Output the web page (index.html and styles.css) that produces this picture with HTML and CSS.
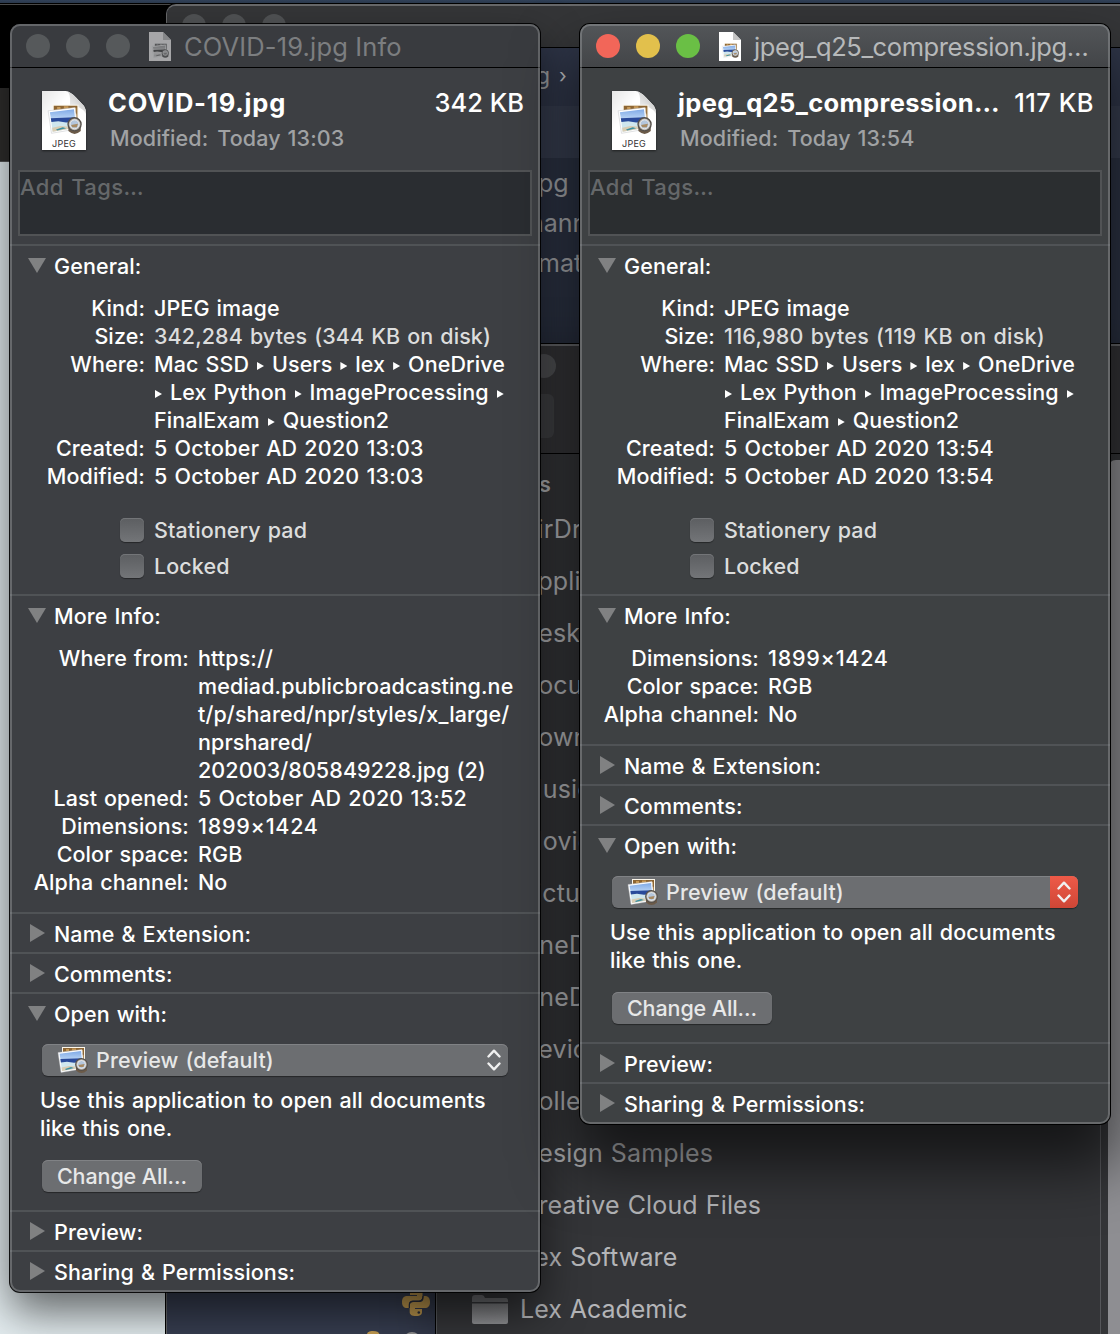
FILE: index.html
```html
<!DOCTYPE html>
<html lang="en">
<head>
<meta charset="utf-8">
<title>File info</title>
<link rel="stylesheet" href="styles.css">
</head>
<body>
<svg class="defs" aria-hidden="true">
  <defs>
    <linearGradient id="page" x1="0" y1="0" x2="1" y2="1"><stop offset="0" stop-color="#e6e6e6"/><stop offset=".35" stop-color="#fff"/></linearGradient>
    <linearGradient id="curl" x1="0" y1="1" x2="1" y2="0"><stop offset="0" stop-color="#fff"/><stop offset="1" stop-color="#b9b9b9"/></linearGradient>
    <linearGradient id="sky" x1="0" y1="0" x2="0" y2="1"><stop offset="0" stop-color="#7fa9e6"/><stop offset="1" stop-color="#c3dcf8"/></linearGradient>
    <linearGradient id="folder" x1="0" y1="0" x2="0" y2="1"><stop offset="0" stop-color="#737477"/><stop offset="1" stop-color="#919295"/></linearGradient>
    <symbol id="photos" viewBox="0 0 32 28">
      <path d="M5 1 28 1 28 20 5 20Z" fill="#fbf6ea"/>
      <path d="M6 2H27V18H6Z" fill="#8d6532"/>
      <path d="M9 3h3v2H9zM15 2.500h4v2h-4zM22 4h4v3h-4zM24 9h2.500v4H24z" fill="#c79a58"/>
      <path d="M1 6.500 25 3.500 27.500 22.500 4 26.500Z" fill="#fff" stroke="#b9bcc0" stroke-width=".4"/>
      <path d="M2.500 7.700 24 5 25 14 3.800 15Z" fill="url(#sky)"/>
      <path d="M3.500 14 24.800 12.500 26 21.400 5 25Z" fill="#cfe6ee"/>
      <path d="M3.400 13 24.700 12.300 25.200 16 17 16.800 10 15.800 3.900 16.500Z" fill="#2a4a9a"/>
      <path d="M4.600 21.500 12 20 18 20.500 20 22.500 5 25Z" fill="#d9cdb4"/>
      <path d="M8 23 14 21 17 22 9 24Z" fill="#3a8fa0"/>
      <path d="M19 20h11v4.500q-5.500 5-11 0Z" fill="#6b5a48"/>
      <circle cx="24.500" cy="18.500" r="5.800" fill="#b9b4ad" stroke="#55504b" stroke-width="1.200"/>
      <circle cx="24.500" cy="18.500" r="4" fill="#b4c6dc" stroke="#f0f0f0" stroke-width=".8"/>
      <path d="M21.400 19 27.500 18.100 26.500 21 22.500 21Z" fill="#a88a62"/>
    </symbol>
    <symbol id="jpeg" viewBox="0 0 46 61">
      <path d="M1 1H25Q30 2 35 7.500L43 16Q45 19 45 24V60H1Z" fill="url(#page)"/>
      <path d="M25 1Q30 2 29 15Q38 15 45 23Q45 19 43 16L35 7.500Q30 2 25 1Z" fill="url(#curl)"/>
      <use href="#photos" x="6" y="13.500" width="36" height="31.500"/>
    </symbol>
    <symbol id="proxy" viewBox="0 0 22 29">
      <path d="M0 0H14L22 8V29H0Z" fill="#fff"/>
      <path d="M14 0V8H22Z" fill="#c4c4c4"/>
      <use href="#photos" x="2.500" y="10" width="18" height="17"/>
    </symbol>
    <symbol id="open" viewBox="0 0 18 15"><path d="M0 0H18L9 15Z" fill="#808182"/></symbol>
    <symbol id="closed" viewBox="0 0 15 18"><path d="M0 0V18L15 9Z" fill="#808182"/></symbol>
    <symbol id="updown" viewBox="0 0 14 22"><path d="M1.500 7.500 7 1.700 12.500 7.500M1.500 14.500 7 20.300 12.500 14.500" fill="none" stroke="#f0f0f0" stroke-width="2.400" stroke-linecap="round" stroke-linejoin="round"/></symbol>
    <symbol id="python" viewBox="0 0 28 28">
      <path d="M14 0C9 0 8 2 8 4V7H15V8H5C2 8 0 10 0 14S2 20 5 20H7V16.500C7 14 9 12.500 11 12.500H17C19 12.500 20.500 11 20.500 9V4C20.500 1.500 18.500 0 14 0Z" fill="#c79f52"/>
      <path d="M14 28C19 28 20 26 20 24V21H13V20H23C26 20 28 18 28 14S26 8 23 8H21.500V10.500C21.500 13 19.500 14 17.500 14H11.500C9 14 7.700 15.500 7.700 17.500V24C7.700 26.500 9.500 28 14 28Z" fill="#c79f52"/>
      <path d="M7.300 20V17Q7.300 13.300 11 13.300H17Q21 13 21 8" fill="none" stroke="#2b3040" stroke-width="1.200"/>
      <circle cx="16.800" cy="24.500" r="1.300" fill="#2b3040"/>
    </symbol>
  </defs>
</svg>

<main class="desktop">
  <div class="page-behind"><div class="page-top"></div><div class="page-bar"></div></div>

  <section class="editor">
    <div class="editor-title"><i></i><i></i><i></i></div>
    <div class="editor-row crumb"><span>g</span><span class="sep">›</span></div>
    <div class="editor-row tabs"></div>
    <div class="editor-row code"><span>pg</span><span class="l2">hann</span><span class="l3">mat</span></div>
    <svg class="py one"><use href="#python"/></svg>
    <svg class="py two"><use href="#python"/></svg>
    <span class="knob"></span>
  </section>

  <section class="finder">
    <div class="finder-bar"><i></i><b></b></div>
    <div class="finder-body">
      <ul class="sidebar">
        <li class="head">Favourites</li>
        <li>AirDrop</li><li>Applications</li><li>Desktop</li><li>Documents</li><li>Downloads</li>
        <li>Music</li><li>Movies</li><li>Pictures</li><li>OneDrive</li><li>OneDrive</li>
        <li>Devices</li><li>Collections</li><li>Design Samples</li><li>Creative Cloud Files</li><li>Lex Software</li>
        <li class="with-icon"><svg class="folder" viewBox="0 0 36 29"><path d="M0 3Q0 0 3 0H10Q12 0 13 3H34Q36 3 36 6V7H0Z" fill="#68696c"/><path d="M0 8.500H36V27Q36 29 34 29H2Q0 29 0 27Z" fill="url(#folder)"/></svg>Lex Academic</li>
      </ul>
      <div class="finder-scroll"></div>
    </div>
  </section>

  <article class="info left">
    <header class="titlebar">
      <i></i><i></i><i></i>
      <svg class="proxy"><use href="#proxy"/></svg>
      <h1>COVID-19.jpg Info</h1>
    </header>
    <div class="summary">
      <div class="doc"><svg><use href="#jpeg"/></svg><small>JPEG</small></div>
      <div class="meta">
        <div class="name"><strong>COVID-19.jpg</strong><span>342 KB</span></div>
        <p><span>Modified:</span> Today 13:03</p>
      </div>
    </div>
    <div class="tags">Add Tags…</div>

    <section class="group general">
      <h2><svg class="down"><use href="#open"/></svg>General:</h2>
      <dl>
        <dt>Kind:</dt><dd>JPEG image</dd>
        <dt>Size:</dt><dd class="dim">342,284 bytes (344 KB on disk)</dd>
        <dt>Where:</dt><dd>Mac SSD <em></em> Users <em></em> lex <em></em> OneDrive<br><em></em> Lex Python <em></em> ImageProcessing <em></em><br>FinalExam <em></em> Question2</dd>
        <dt>Created:</dt><dd class="date">5 October AD 2020 13:03</dd>
        <dt>Modified:</dt><dd class="date">5 October AD 2020 13:03</dd>
      </dl>
      <div class="checks"><label><b></b>Stationery pad</label><label><b></b>Locked</label></div>
    </section>
    <section class="group more">
      <h2><svg class="down"><use href="#open"/></svg>More Info:</h2>
      <dl>
        <dt>Where from:</dt><dd>https://<br>mediad.publicbroadcasting.ne<br>t/p/shared/npr/styles/x_large/<br>nprshared/<br>202003/805849228.jpg (2)</dd>
        <dt>Last opened:</dt><dd class="date">5 October AD 2020 13:52</dd>
        <dt>Dimensions:</dt><dd class="pixels">1899×1424</dd>
        <dt>Color space:</dt><dd>RGB</dd>
        <dt>Alpha channel:</dt><dd>No</dd>
      </dl>
    </section>
    <section class="group"><h2><svg class="right-tri"><use href="#closed"/></svg>Name &amp; Extension:</h2></section>
    <section class="group"><h2><svg class="right-tri"><use href="#closed"/></svg>Comments:</h2></section>
    <section class="group open">
      <h2><svg class="down"><use href="#open"/></svg>Open with:</h2>
      <div class="select"><svg class="app"><use href="#photos"/></svg><span>Preview (default)</span><div class="stepper"><svg><use href="#updown"/></svg></div></div>
      <p>Use this application to open all documents<br>like this one.</p>
      <button>Change All…</button>
    </section>
    <section class="group"><h2><svg class="right-tri"><use href="#closed"/></svg>Preview:</h2></section>
    <section class="group"><h2><svg class="right-tri"><use href="#closed"/></svg>Sharing &amp; Permissions:</h2></section>
  </article>

  <article class="info active">
    <header class="titlebar">
      <i class="red"></i><i class="yellow"></i><i class="green"></i>
      <svg class="proxy"><use href="#proxy"/></svg>
      <h1>jpeg_q25_compression.jpg…</h1>
    </header>
    <div class="summary">
      <div class="doc"><svg><use href="#jpeg"/></svg><small>JPEG</small></div>
      <div class="meta">
        <div class="name"><strong>jpeg_q25_compression…</strong><span>117 KB</span></div>
        <p><span>Modified:</span> Today 13:54</p>
      </div>
    </div>
    <div class="tags">Add Tags…</div>

    <section class="group general">
      <h2><svg class="down"><use href="#open"/></svg>General:</h2>
      <dl>
        <dt>Kind:</dt><dd>JPEG image</dd>
        <dt>Size:</dt><dd class="dim">116,980 bytes (119 KB on disk)</dd>
        <dt>Where:</dt><dd>Mac SSD <em></em> Users <em></em> lex <em></em> OneDrive<br><em></em> Lex Python <em></em> ImageProcessing <em></em><br>FinalExam <em></em> Question2</dd>
        <dt>Created:</dt><dd class="date">5 October AD 2020 13:54</dd>
        <dt>Modified:</dt><dd class="date">5 October AD 2020 13:54</dd>
      </dl>
      <div class="checks"><label><b></b>Stationery pad</label><label><b></b>Locked</label></div>
    </section>
    <section class="group more">
      <h2><svg class="down"><use href="#open"/></svg>More Info:</h2>
      <dl>
        <dt>Dimensions:</dt><dd class="pixels">1899×1424</dd>
        <dt>Color space:</dt><dd>RGB</dd>
        <dt>Alpha channel:</dt><dd>No</dd>
      </dl>
    </section>
    <section class="group"><h2><svg class="right-tri"><use href="#closed"/></svg>Name &amp; Extension:</h2></section>
    <section class="group"><h2><svg class="right-tri"><use href="#closed"/></svg>Comments:</h2></section>
    <section class="group open">
      <h2><svg class="down"><use href="#open"/></svg>Open with:</h2>
      <div class="select"><svg class="app"><use href="#photos"/></svg><span>Preview (default)</span><div class="stepper"><svg><use href="#updown"/></svg></div></div>
      <p>Use this application to open all documents<br>like this one.</p>
      <button>Change All…</button>
    </section>
    <section class="group"><h2><svg class="right-tri"><use href="#closed"/></svg>Preview:</h2></section>
    <section class="group"><h2><svg class="right-tri"><use href="#closed"/></svg>Sharing &amp; Permissions:</h2></section>
  </article>
</main>
</body>
</html>
```
FILE: styles.css
```css
* { box-sizing: border-box; margin: 0; padding: 0; }
body { font-family: Inter, "Liberation Sans", sans-serif; overflow: hidden; }
.defs { position: absolute; width: 0; height: 0; }
i, em { font-style: normal; }
svg { display: block; flex: none; }

.desktop {
  position: relative; width: 1120px; height: 1334px; overflow: hidden;
  background: linear-gradient(#32425a 0, #2b394c 3px, #000 3px, #000 4px, #2c3a4c 4px);
}

/* windows behind */
.page-behind { position: absolute; left: 0; top: 4px; width: 180px; height: 1330px; background: #e4edf0; border-top: 1px solid #4a4a4a; }
.page-top { height: 83px; background: #000; }
.page-bar { height: 74px; background: #2f2e2d; border-bottom: 1px solid #555; }

.editor {
  position: absolute; left: 166px; top: 4px; width: 970px; height: 1340px; overflow: hidden;
  border-radius: 10px 0 0 0; background: #373e51; border: 1px solid #68696b; border-width: 2px 0 0 1px;
  box-shadow: 0 0 0 1px #000;
}
.editor-title { display: flex; gap: 16px; height: 42px; padding: 8px 0 0 15px; background: #353638; border-bottom: 1px solid #000; }
.editor-title i { width: 24px; height: 24px; border-radius: 50%; background: #515355; }
.editor-row { color: #a5a7ab; font-size: 25px; white-space: nowrap; }
.crumb { display: flex; gap: 9px; height: 58px; background: #30374a; padding: 14px 0 0 369px; font-size: 23px; }
.crumb .sep { font-size: 20px; line-height: 29px; color: #c3c5c9; }
.tabs { height: 52px; background: #373e50; }
.code { display: flex; flex-direction: column; height: 186px; padding: 5px 0 0 371px; line-height: 40px; background: #2c3344; }
.code .l2 { margin-left: -9px; }
.py { position: absolute; width: 28px; height: 28px; left: 235px; top: 1282px; }
.py.two { left: 192px; top: 1325px; }
.knob { position: absolute; left: 236px; top: 1326px; width: 18px; height: 18px; border-radius: 50%; border: 2px solid #999; }

.finder {
  position: absolute; left: 436px; top: 344px; width: 700px; height: 1000px;
  background: #343538; border-top: 2px solid #646568; border-left: 1px solid #55575a;
  box-shadow: 0 0 0 1px #000, 0 10px 50px rgba(0,0,0,.3);
}
.finder-bar { display: flex; height: 108px; background: #343437; border-bottom: 1px solid #000; }
.finder-bar i { width: 24px; height: 24px; margin: 8px 0 0 95px; border-radius: 50%; background: #505154; }
.finder-bar b { width: 40px; height: 44px; margin: 48px 0 0 -42px; border-radius: 6px; background: #404144; }
.finder-body { display: flex; height: 892px; }
.sidebar { flex: none; width: 664px; list-style: none; padding-top: 4px; border-right: 1px solid #55565a; }
.sidebar li { height: 52px; padding-left: 83px; line-height: 52px; font-size: 25px; letter-spacing: .15px; word-spacing: .8px; color: #b4b5b8; white-space: nowrap; }
.sidebar .head { height: 45px; line-height: 54px; padding-left: 0; width: 114px; text-align: right; font-size: 21px; font-weight: 600; }
.sidebar .with-icon { display: flex; align-items: center; gap: 12px; padding-left: 35px; letter-spacing: 0; }
.folder { width: 36px; height: 29px; }
.finder-scroll { flex: none; width: 40px; margin: 6px 0 0 7px; border-radius: 8px 0 0 0; background: #8e8e92; }

/* info panels */
.info {
  position: absolute; left: 10px; top: 24px; width: 530px; color: #fff;
  font-size: 21.5px; font-weight: 500; line-height: 28px; letter-spacing: .1px; word-spacing: 1.1px;
  border-radius: 10px; background: #3d3f43;
  box-shadow: 0 0 0 1px rgba(0,0,0,.9), 0 20px 44px rgba(0,0,0,.58);
}
.info.left { height: 1268px; }
.info.active { left: 580px; height: 1100px; background: #3e4143; box-shadow: 0 0 0 1px #000, 0 36px 60px 6px rgba(0,0,0,.6); }
.info::after { content: ""; position: absolute; inset: 0; border: 2px solid rgba(160,163,165,.42); border-radius: 10px; pointer-events: none; }
.titlebar { display: flex; align-items: center; height: 44px; padding: 1px 0 0 16px; border-radius: 10px 10px 0 0; background: #393b3f; border-bottom: 1px solid #000; }
.active .titlebar { background: linear-gradient(#535659, #434548); }
.titlebar i { width: 24px; height: 24px; margin-right: 16px; border-radius: 50%; background: #56595b; }
.titlebar .red { background: #f26659; }
.titlebar .yellow { background: #e2c04c; }
.titlebar .green { background: #6abf45; }
.proxy { width: 22px; height: 29px; margin-left: 3px; }
.left .proxy { filter: grayscale(1); opacity: .55; }
.titlebar h1 { margin-left: 13px; padding-top: 2px; font-size: 25.5px; font-weight: 400; letter-spacing: .15px; word-spacing: 0; color: #7c7e80; white-space: nowrap; }
.active .titlebar h1 { letter-spacing: -.4px; color: #b7b9ba; }
.summary { display: flex; height: 102px; padding: 21px 16px 0 30px; }
.doc { position: relative; width: 48px; height: 62px; margin-top: 1px; }
.doc svg { width: 48px; height: 61px; filter: drop-shadow(0 1px 1px rgba(0,0,0,.5)); }
.doc small { position: absolute; left: 0; right: 0; bottom: 3px; text-align: center; font-size: 9px; font-weight: 400; line-height: 10px; letter-spacing: .2px; color: #333; }
.meta { flex: 1; margin-left: 20px; }
.name { display: flex; justify-content: space-between; font-size: 25.5px; line-height: 28px; letter-spacing: 0; word-spacing: 0; white-space: nowrap; }
.name strong { font-weight: 700; letter-spacing: .8px; }
.active .name strong { letter-spacing: .35px; }
.active .name span { letter-spacing: .5px; }
.meta p { margin: 7px 0 0 2px; color: #a0a2a4; }
.meta p span { margin-right: 2px; }
.tags { height: 66px; margin: 0 8px 8px; padding: 1px 0 0 0; border: 2px solid #515355; background: #2a2d31; font-size: 22px; letter-spacing: .4px; color: #65686a; }
.active .tags { background: #2b2e30; }

.group { border-top: 2px solid #505356; }
.group h2 { display: flex; align-items: center; height: 38px; padding: 2px 0 0 18px; font-size: inherit; font-weight: 500; }
.down { width: 18px; height: 15px; margin: -2px 8px 0 0; }
.right-tri { width: 15px; height: 18px; margin: -2px 9px 0 2px; }
dl { display: grid; grid-template-columns: 135px 1fr; column-gap: 9px; padding-top: 10px; white-space: nowrap; }
.more dl { grid-template-columns: 179px 1fr; padding-bottom: 16px; }
dt { text-align: right; }
.date { letter-spacing: .2px; }
.pixels { letter-spacing: .75px; }
.dim, .checks { color: #dcdddd; }
.active .dim { letter-spacing: .25px; }
dd em { display: inline-block; width: 7px; height: 8px; margin: 0 1px 2px 1px; background: #fff; clip-path: polygon(0 0, 100% 50%, 0 100%); }
.checks { padding: 22px 0 10px 110px; }
.checks label { display: flex; align-items: center; gap: 10px; height: 36px; }
.checks b { width: 24px; height: 24px; border-radius: 5px; background: linear-gradient(#5c5e61, #737578); box-shadow: 0 1px 1px rgba(0,0,0,.4), inset 0 1px 0 #737578; }
.open { padding-bottom: 18px; }
.open .select { display: flex; align-items: center; width: 466px; height: 32px; margin: 12px 0 0 32px; padding-left: 15px; border-radius: 6px; overflow: hidden; background: #6c6e71; color: #e7e8e8; box-shadow: 0 1px 1px rgba(0,0,0,.4), inset 0 1px 0 #808285; }
.app { width: 32px; height: 28px; margin-right: 7px; }
.stepper { display: flex; align-items: center; justify-content: center; width: 28px; height: 32px; margin-left: auto; }
.stepper svg { width: 14px; height: 22px; }
.active .stepper { background: linear-gradient(#ee5a48, #cf4636); }
.open p { margin: 10px 0 18px 30px; white-space: nowrap; }
.open button { display: block; width: 160px; height: 32px; margin-left: 32px; border: 0; border-radius: 6px; background: #6c6e71; color: #e7e8e8; font: inherit; letter-spacing: -.1px; line-height: 32px; box-shadow: 0 1px 1px rgba(0,0,0,.4), inset 0 1px 0 #808285; }
```
